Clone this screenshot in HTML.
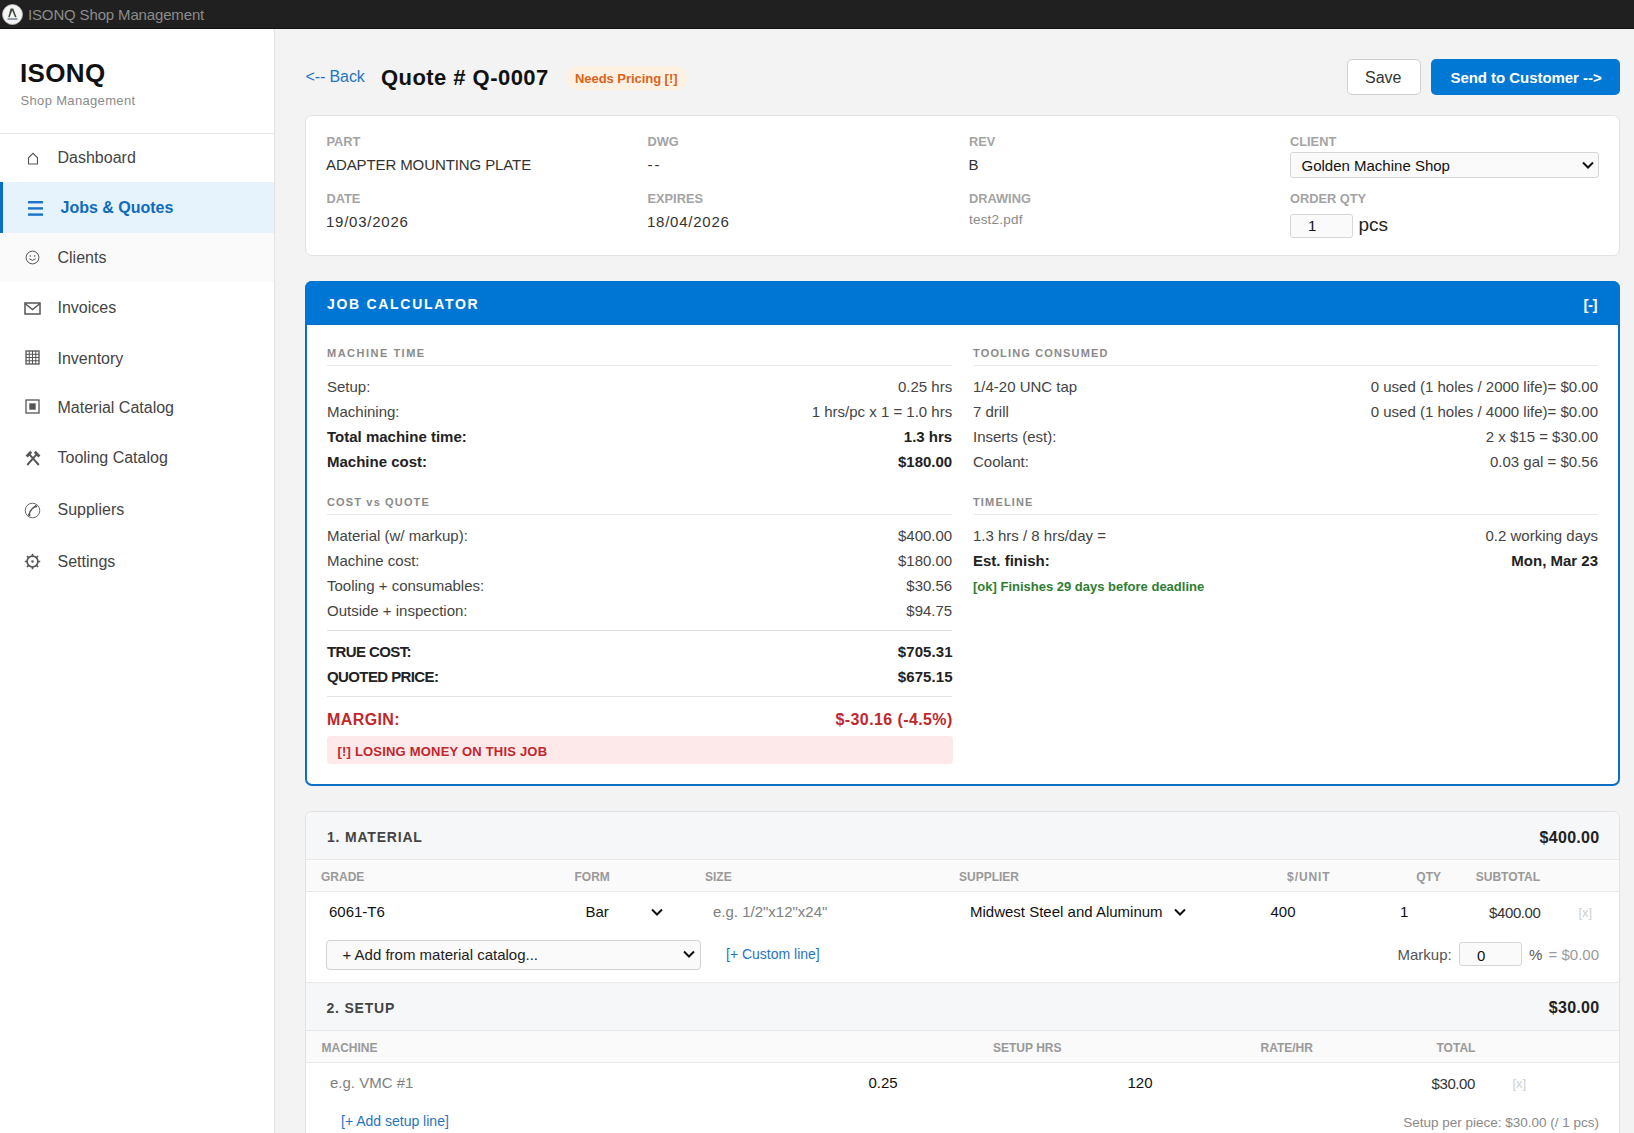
<!DOCTYPE html>
<html><head><meta charset="utf-8"><title>ISONQ Shop Management</title>
<style>
html,body{margin:0;padding:0;}
body{width:1634px;height:1133px;overflow:hidden;position:relative;background:#f3f3f3;font-family:"Liberation Sans",sans-serif;}
.t{position:absolute;white-space:nowrap;}
.b{position:absolute;}
</style></head><body>
<div class="b" style="left:0px;top:0px;width:1634px;height:28px;background:#202020;"></div>
<div class="b" style="left:0px;top:28px;width:1634px;height:1px;background:#111;"></div>
<svg class="b" style="left:2px;top:4px" width="21" height="21" viewBox="0 0 21 21"><circle cx="10.5" cy="10.5" r="10" fill="#f4f4f4" stroke="#bbb" stroke-width="0.8"/><path d="M8.6 4.5 L11.2 4.5 L14.6 13.2 L13 13.2 L10.2 6.4 L7.6 13.2 L6.2 13.2 Z" fill="#3a4a3a"/><rect x="5.5" y="14.2" width="10" height="1.6" fill="#7a8a9a"/></svg>
<div class="t" style="top:7.3px;font-size:15px;line-height:15px;color:#8c8c8c;letter-spacing:-0.15px;left:28.0px;">ISONQ Shop Management</div>
<div class="b" style="left:0px;top:29px;width:274px;height:1104px;background:#fff;"></div>
<div class="b" style="left:274px;top:29px;width:1px;height:1104px;background:#e3e3e3;"></div>
<div class="t" style="top:59.5px;font-size:26px;line-height:26px;color:#111;font-weight:700;letter-spacing:0.35px;left:20.0px;">ISONQ</div>
<div class="t" style="top:94.0px;font-size:13px;line-height:13px;color:#8a8a8a;letter-spacing:0.34px;left:20.5px;">Shop Management</div>
<div class="b" style="left:0px;top:133px;width:274px;height:1px;background:#e6e6e6;"></div>
<div class="b" style="left:0px;top:182px;width:274px;height:51px;background:#e6f2fc;"></div>
<div class="b" style="left:0px;top:182px;width:3px;height:51px;background:#0a6fc8;"></div>
<div class="b" style="left:0px;top:233px;width:274px;height:49px;background:#fafafa;"></div>
<div class="t" style="top:149.5px;font-size:16px;line-height:16px;color:#444;left:57.5px;">Dashboard</div>
<div class="t" style="top:200.0px;font-size:16px;line-height:16px;color:#0e6bbf;font-weight:700;left:60.5px;">Jobs &amp; Quotes</div>
<div class="t" style="top:249.5px;font-size:16px;line-height:16px;color:#444;left:57.5px;">Clients</div>
<div class="t" style="top:299.5px;font-size:16px;line-height:16px;color:#444;left:57.5px;">Invoices</div>
<div class="t" style="top:350.5px;font-size:16px;line-height:16px;color:#444;left:57.5px;">Inventory</div>
<div class="t" style="top:399.5px;font-size:16px;line-height:16px;color:#444;left:57.5px;">Material Catalog</div>
<div class="t" style="top:449.5px;font-size:16px;line-height:16px;color:#444;left:57.5px;">Tooling Catalog</div>
<div class="t" style="top:501.5px;font-size:16px;line-height:16px;color:#444;left:57.5px;">Suppliers</div>
<div class="t" style="top:553.5px;font-size:16px;line-height:16px;color:#444;left:57.5px;">Settings</div>
<svg class="b" style="left:27px;top:152px" width="12" height="13" viewBox="0 0 12 13"><path d="M1.5 12 V5.8 L6 1.3 L10.5 5.8 V12 Z" fill="none" stroke="#555" stroke-width="1.1"/></svg>
<svg class="b" style="left:27px;top:200px" width="17" height="17" viewBox="0 0 17 17"><rect x="1" y="1" width="15" height="2.4" fill="#1a73c8"/><rect x="1" y="7.2" width="15" height="2.4" fill="#1a73c8"/><rect x="1" y="13.4" width="15" height="2.4" fill="#1a73c8"/></svg>
<svg class="b" style="left:25px;top:250px" width="15" height="15" viewBox="0 0 15 15"><circle cx="7.5" cy="7.5" r="6.4" fill="none" stroke="#555" stroke-width="1"/><circle cx="5.3" cy="6" r="0.8" fill="#555"/><circle cx="9.7" cy="6" r="0.8" fill="#555"/><path d="M4.3 8.8 Q7.5 11.8 10.7 8.8" fill="none" stroke="#555" stroke-width="1"/></svg>
<svg class="b" style="left:24px;top:302px" width="17" height="13" viewBox="0 0 17 13"><rect x="1" y="1" width="15" height="11" fill="none" stroke="#555" stroke-width="1.5"/><path d="M1 1.5 L8.5 7.5 L16 1.5" fill="none" stroke="#555" stroke-width="1.4"/></svg>
<svg class="b" style="left:25px;top:350px" width="15" height="15" viewBox="0 0 15 15"><rect x="1" y="1" width="13" height="13" fill="none" stroke="#555" stroke-width="1.3"/><path d="M4.25 1V14 M7.5 1V14 M10.75 1V14 M1 4.25H14 M1 7.5H14 M1 10.75H14" stroke="#555" stroke-width="1"/></svg>
<svg class="b" style="left:25px;top:399px" width="15" height="15" viewBox="0 0 15 15"><rect x="1" y="1" width="13" height="13" fill="none" stroke="#555" stroke-width="1.3"/><rect x="4.3" y="4.3" width="6.4" height="6.4" fill="#555"/></svg>
<svg class="b" style="left:25px;top:450px" width="16" height="16" viewBox="0 0 16 16"><path d="M2.2 15 L11.6 4.4 M13.8 15 L4.4 4.4" stroke="#555" stroke-width="1.9"/><path d="M1.6 6.4 L6.2 1.8 M9.8 1.8 L14.4 6.4" stroke="#555" stroke-width="2.8"/></svg>
<svg class="b" style="left:24px;top:502px" width="17" height="17" viewBox="0 0 17 17"><circle cx="8.5" cy="8.5" r="7.3" fill="none" stroke="#555" stroke-width="0.9"/><path d="M5 13 Q6 7 12 4" fill="none" stroke="#555" stroke-width="1.5"/><path d="M4.3 12.2 L6.3 13.8 M11 3.6 L12.8 5" stroke="#555" stroke-width="2"/></svg>
<svg class="b" style="left:24px;top:553px" width="17" height="17" viewBox="0 0 17 17"><circle cx="8.5" cy="8.5" r="5.4" fill="none" stroke="#555" stroke-width="1.6"/><circle cx="8.5" cy="8.5" r="1.2" fill="#555"/><path d="M8.5 0.8V3 M8.5 14V16.2 M0.8 8.5H3 M14 8.5H16.2 M3 3L4.6 4.6 M12.4 12.4L14 14 M3 14L4.6 12.4 M12.4 4.6L14 3" stroke="#555" stroke-width="1.6"/></svg>
<div class="b" style="left:275px;top:29px;width:1359px;height:1104px;background:#f3f3f3;"></div>
<div class="t" style="top:69.3px;font-size:16px;line-height:16px;color:#1f74c2;letter-spacing:-0.1px;left:305.5px;">&lt;-- Back</div>
<div class="t" style="top:66.9px;font-size:22px;line-height:22px;color:#111;font-weight:700;letter-spacing:0.45px;left:381.0px;">Quote # Q-0007</div>
<div class="b" style="left:566px;top:66px;width:121px;height:24px;background:#fdf1e3;border-radius:12px;"></div>
<div class="t" style="top:71.6px;font-size:13px;line-height:13px;color:#d9641c;font-weight:700;letter-spacing:-0.05px;left:575.0px;">Needs Pricing [!]</div>
<div class="b" style="left:1347px;top:59px;width:74px;height:36px;background:#fff;border:1px solid #cfcfcf;border-radius:5px;box-sizing:border-box;"></div>
<div class="t" style="top:69.5px;font-size:16px;line-height:16px;color:#333;left:1365.0px;">Save</div>
<div class="b" style="left:1431px;top:59px;width:189px;height:36px;background:#0078d4;border-radius:5px;"></div>
<div class="t" style="top:70.3px;font-size:15px;line-height:15px;color:#fff;font-weight:700;letter-spacing:-0.05px;left:1450.5px;">Send to Customer --&gt;</div>
<div class="b" style="left:305px;top:115px;width:1315px;height:141px;background:#fff;border:1px solid #e2e2e2;border-radius:7px;box-sizing:border-box;"></div>
<div class="t" style="top:136.2px;font-size:12.8px;line-height:12.8px;color:#a3a3a3;font-weight:700;left:326.5px;">PART</div>
<div class="t" style="top:193.2px;font-size:12.8px;line-height:12.8px;color:#a3a3a3;font-weight:700;left:326.5px;">DATE</div>
<div class="t" style="top:136.2px;font-size:12.8px;line-height:12.8px;color:#a3a3a3;font-weight:700;left:647.5px;">DWG</div>
<div class="t" style="top:193.2px;font-size:12.8px;line-height:12.8px;color:#a3a3a3;font-weight:700;left:647.5px;">EXPIRES</div>
<div class="t" style="top:136.2px;font-size:12.8px;line-height:12.8px;color:#a3a3a3;font-weight:700;left:969.0px;">REV</div>
<div class="t" style="top:193.2px;font-size:12.8px;line-height:12.8px;color:#a3a3a3;font-weight:700;left:969.0px;">DRAWING</div>
<div class="t" style="top:136.2px;font-size:12.8px;line-height:12.8px;color:#a3a3a3;font-weight:700;left:1290.0px;">CLIENT</div>
<div class="t" style="top:193.2px;font-size:12.8px;line-height:12.8px;color:#a3a3a3;font-weight:700;left:1290.0px;">ORDER QTY</div>
<div class="t" style="top:157.3px;font-size:15px;line-height:15px;color:#333;letter-spacing:-0.1px;left:326.0px;">ADAPTER MOUNTING PLATE</div>
<div class="t" style="top:157.3px;font-size:15px;line-height:15px;color:#333;letter-spacing:2px;left:647.5px;">--</div>
<div class="t" style="top:157.3px;font-size:15px;line-height:15px;color:#333;left:968.5px;">B</div>
<div class="t" style="top:214.3px;font-size:15px;line-height:15px;color:#333;letter-spacing:0.75px;left:326.0px;">19/03/2026</div>
<div class="t" style="top:214.3px;font-size:15px;line-height:15px;color:#333;letter-spacing:0.75px;left:647.0px;">18/04/2026</div>
<div class="t" style="top:212.6px;font-size:13.5px;line-height:13.5px;color:#8a8a8a;letter-spacing:0.2px;left:969.0px;">test2.pdf</div>
<div class="b" style="left:1290px;top:152px;width:309px;height:26px;background:#fafafa;border:1px solid #d6d6d6;border-radius:3px;box-sizing:border-box;"></div>
<div class="t" style="top:158.3px;font-size:15px;line-height:15px;color:#111;left:1301.5px;">Golden Machine Shop</div>
<svg class="b" style="left:1581px;top:159px" width="14" height="12" viewBox="0 0 14 12"><path d="M2 3.5 L7 8.5 L12 3.5" fill="none" stroke="#111" stroke-width="2"/></svg>
<div class="b" style="left:1290px;top:214px;width:63px;height:24px;background:#fafafa;border:1px solid #d6d6d6;border-radius:3px;box-sizing:border-box;"></div>
<div class="t" style="top:217.8px;font-size:15px;line-height:15px;color:#111;left:1308.0px;">1</div>
<div class="t" style="top:214.9px;font-size:19px;line-height:19px;color:#222;left:1358.5px;">pcs</div>
<div class="b" style="left:305px;top:281px;width:1315px;height:505px;background:#fff;border:2px solid #0b6fc6;border-radius:7px;box-sizing:border-box;"></div>
<div class="b" style="left:305px;top:281px;width:1315px;height:44px;background:#0076d4;border-radius:7px 7px 0 0;border-bottom:1px solid #0a6cc0;box-sizing:border-box;"></div>
<div class="t" style="top:297.1px;font-size:14px;line-height:14px;color:#fff;font-weight:700;letter-spacing:1.7px;left:327.0px;">JOB CALCULATOR</div>
<div class="t" style="top:296.8px;font-size:15px;line-height:15px;color:#fff;font-weight:700;letter-spacing:-0.5px;left:1583.5px;">[-]</div>
<div class="t" style="top:347.7px;font-size:11px;line-height:11px;color:#8a8a8a;font-weight:700;letter-spacing:1.5px;left:327.0px;">MACHINE TIME</div>
<div class="b" style="left:327px;top:365px;width:625.2px;height:1px;background:#e9e9e9;"></div>
<div class="t" style="top:347.7px;font-size:11px;line-height:11px;color:#8a8a8a;font-weight:700;letter-spacing:1.15px;left:973.0px;">TOOLING CONSUMED</div>
<div class="b" style="left:973px;top:365px;width:625px;height:1px;background:#e9e9e9;"></div>
<div class="t" style="top:379.3px;font-size:15px;line-height:15px;color:#444;left:327.0px;">Setup:</div>
<div class="t" style="top:379.3px;font-size:15px;line-height:15px;color:#444;right:681.8px;text-align:right;">0.25 hrs</div>
<div class="t" style="top:404.3px;font-size:15px;line-height:15px;color:#444;left:327.0px;">Machining:</div>
<div class="t" style="top:404.3px;font-size:15px;line-height:15px;color:#444;right:681.8px;text-align:right;">1 hrs/pc x 1 = 1.0 hrs</div>
<div class="t" style="top:429.3px;font-size:15px;line-height:15px;color:#222;font-weight:700;left:327.0px;">Total machine time:</div>
<div class="t" style="top:429.3px;font-size:15px;line-height:15px;color:#222;font-weight:700;right:681.8px;text-align:right;">1.3 hrs</div>
<div class="t" style="top:453.8px;font-size:15px;line-height:15px;color:#222;font-weight:700;left:327.0px;">Machine cost:</div>
<div class="t" style="top:453.8px;font-size:15px;line-height:15px;color:#222;font-weight:700;right:681.8px;text-align:right;">$180.00</div>
<div class="t" style="top:379.3px;font-size:15px;line-height:15px;color:#444;left:973.0px;">1/4-20 UNC tap</div>
<div class="t" style="top:379.3px;font-size:15px;line-height:15px;color:#444;right:36.0px;text-align:right;">0 used (1 holes / 2000 life)= $0.00</div>
<div class="t" style="top:404.3px;font-size:15px;line-height:15px;color:#444;left:973.0px;">7 drill</div>
<div class="t" style="top:404.3px;font-size:15px;line-height:15px;color:#444;right:36.0px;text-align:right;">0 used (1 holes / 4000 life)= $0.00</div>
<div class="t" style="top:429.3px;font-size:15px;line-height:15px;color:#444;left:973.0px;">Inserts (est):</div>
<div class="t" style="top:429.3px;font-size:15px;line-height:15px;color:#444;right:36.0px;text-align:right;">2 x $15 = $30.00</div>
<div class="t" style="top:453.8px;font-size:15px;line-height:15px;color:#444;left:973.0px;">Coolant:</div>
<div class="t" style="top:453.8px;font-size:15px;line-height:15px;color:#444;right:36.0px;text-align:right;">0.03 gal = $0.56</div>
<div class="t" style="top:496.7px;font-size:11px;line-height:11px;color:#8a8a8a;font-weight:700;letter-spacing:1.15px;left:327.0px;">COST vs QUOTE</div>
<div class="b" style="left:327px;top:514px;width:625.2px;height:1px;background:#e9e9e9;"></div>
<div class="t" style="top:496.7px;font-size:11px;line-height:11px;color:#8a8a8a;font-weight:700;letter-spacing:1.15px;left:973.0px;">TIMELINE</div>
<div class="b" style="left:973px;top:514px;width:625px;height:1px;background:#e9e9e9;"></div>
<div class="t" style="top:528.3px;font-size:15px;line-height:15px;color:#444;left:327.0px;">Material (w/ markup):</div>
<div class="t" style="top:528.3px;font-size:15px;line-height:15px;color:#444;right:681.8px;text-align:right;">$400.00</div>
<div class="t" style="top:552.9px;font-size:15px;line-height:15px;color:#444;left:327.0px;">Machine cost:</div>
<div class="t" style="top:552.9px;font-size:15px;line-height:15px;color:#444;right:681.8px;text-align:right;">$180.00</div>
<div class="t" style="top:577.9px;font-size:15px;line-height:15px;color:#444;left:327.0px;">Tooling + consumables:</div>
<div class="t" style="top:577.9px;font-size:15px;line-height:15px;color:#444;right:681.8px;text-align:right;">$30.56</div>
<div class="t" style="top:602.7px;font-size:15px;line-height:15px;color:#444;left:327.0px;">Outside + inspection:</div>
<div class="t" style="top:602.7px;font-size:15px;line-height:15px;color:#444;right:681.8px;text-align:right;">$94.75</div>
<div class="b" style="left:327px;top:630px;width:625.2px;height:1px;background:#e3e3e3;"></div>
<div class="t" style="top:644.3px;font-size:15px;line-height:15px;color:#222;font-weight:700;letter-spacing:-0.6px;left:327.0px;">TRUE COST:</div>
<div class="t" style="top:644.3px;font-size:15px;line-height:15px;color:#222;font-weight:700;letter-spacing:0.1px;right:681.3px;text-align:right;">$705.31</div>
<div class="t" style="top:668.6px;font-size:15px;line-height:15px;color:#222;font-weight:700;letter-spacing:-0.6px;left:327.0px;">QUOTED PRICE:</div>
<div class="t" style="top:668.6px;font-size:15px;line-height:15px;color:#222;font-weight:700;letter-spacing:0.1px;right:681.3px;text-align:right;">$675.15</div>
<div class="b" style="left:327px;top:696px;width:625.2px;height:1px;background:#e3e3e3;"></div>
<div class="t" style="top:711.5px;font-size:16px;line-height:16px;color:#c0272d;font-weight:700;letter-spacing:0.4px;left:327.0px;">MARGIN:</div>
<div class="t" style="top:711.5px;font-size:16px;line-height:16px;color:#c0272d;font-weight:700;letter-spacing:0.4px;right:681.3px;text-align:right;">$-30.16 (-4.5%)</div>
<div class="b" style="left:327px;top:736px;width:626px;height:28px;background:#fde8ea;border-radius:4px;"></div>
<div class="t" style="top:745.0px;font-size:13px;line-height:13px;color:#c0272d;font-weight:700;letter-spacing:0.2px;left:337.5px;">[!] LOSING MONEY ON THIS JOB</div>
<div class="t" style="top:528.3px;font-size:15px;line-height:15px;color:#444;left:973.0px;">1.3 hrs / 8 hrs/day =</div>
<div class="t" style="top:528.3px;font-size:15px;line-height:15px;color:#444;right:36.0px;text-align:right;">0.2 working days</div>
<div class="t" style="top:553.3px;font-size:15px;line-height:15px;color:#222;font-weight:700;left:973.0px;">Est. finish:</div>
<div class="t" style="top:553.3px;font-size:15px;line-height:15px;color:#222;font-weight:700;right:36.0px;text-align:right;">Mon, Mar 23</div>
<div class="t" style="top:579.5px;font-size:13px;line-height:13px;color:#2e7d32;font-weight:700;left:973.0px;">[ok] Finishes 29 days before deadline</div>
<div class="b" style="left:305px;top:811px;width:1315px;height:342px;background:#fff;border:1px solid #e2e2e2;border-radius:7px;box-sizing:border-box;"></div>
<div class="b" style="left:306px;top:812px;width:1313px;height:47px;background:#f6f7f9;border-radius:6px 6px 0 0;"></div>
<div class="b" style="left:306px;top:859px;width:1313px;height:1px;background:#e8e8e8;"></div>
<div class="b" style="left:306px;top:860px;width:1313px;height:31px;background:#fafafa;"></div>
<div class="b" style="left:306px;top:891px;width:1313px;height:1px;background:#e8e8e8;"></div>
<div class="t" style="top:830.1px;font-size:14px;line-height:14px;color:#444;font-weight:700;letter-spacing:0.8px;left:327.0px;">1. MATERIAL</div>
<div class="t" style="top:829.5px;font-size:16px;line-height:16px;color:#222;font-weight:700;letter-spacing:0.3px;right:34.5px;text-align:right;">$400.00</div>
<div class="t" style="top:870.8px;font-size:12px;line-height:12px;color:#999;font-weight:700;left:321.0px;">GRADE</div>
<div class="t" style="top:870.8px;font-size:12px;line-height:12px;color:#999;font-weight:700;left:574.5px;">FORM</div>
<div class="t" style="top:870.8px;font-size:12px;line-height:12px;color:#999;font-weight:700;left:705.0px;">SIZE</div>
<div class="t" style="top:870.8px;font-size:12px;line-height:12px;color:#999;font-weight:700;left:959.0px;">SUPPLIER</div>
<div class="t" style="top:870.8px;font-size:12px;line-height:12px;color:#999;font-weight:700;letter-spacing:0.9px;right:303.5px;text-align:right;">$/UNIT</div>
<div class="t" style="top:870.8px;font-size:12px;line-height:12px;color:#999;font-weight:700;right:193.0px;text-align:right;">QTY</div>
<div class="t" style="top:870.8px;font-size:12px;line-height:12px;color:#999;font-weight:700;right:94.0px;text-align:right;">SUBTOTAL</div>
<div class="t" style="top:904.3px;font-size:15px;line-height:15px;color:#111;left:329.0px;">6061-T6</div>
<div class="t" style="top:904.3px;font-size:15px;line-height:15px;color:#111;left:585.5px;">Bar</div>
<svg class="b" style="left:649px;top:906px" width="16" height="12" viewBox="0 0 16 12"><path d="M3 3.5 L8 8.5 L13 3.5" fill="none" stroke="#111" stroke-width="2"/></svg>
<div class="t" style="top:904.3px;font-size:15px;line-height:15px;color:#808080;left:713.0px;">e.g. 1/2"x12"x24"</div>
<div class="t" style="top:904.3px;font-size:15px;line-height:15px;color:#111;left:970.0px;">Midwest Steel and Aluminum</div>
<svg class="b" style="left:1172px;top:906px" width="16" height="12" viewBox="0 0 16 12"><path d="M3 3.5 L8 8.5 L13 3.5" fill="none" stroke="#111" stroke-width="2"/></svg>
<div class="t" style="top:904.3px;font-size:15px;line-height:15px;color:#111;left:1270.5px;">400</div>
<div class="t" style="top:904.3px;font-size:15px;line-height:15px;color:#111;left:1400.0px;">1</div>
<div class="t" style="top:905.3px;font-size:15px;line-height:15px;color:#333;letter-spacing:-0.4px;right:93.5px;text-align:right;">$400.00</div>
<div class="t" style="top:905.5px;font-size:13px;line-height:13px;color:#cfcfcf;left:1578.5px;">[x]</div>
<div class="b" style="left:326px;top:940px;width:375px;height:30px;background:#fafafa;border:1px solid #d2d2d2;border-radius:4px;box-sizing:border-box;"></div>
<div class="t" style="top:946.6px;font-size:15px;line-height:15px;color:#222;left:342.5px;">+ Add from material catalog...</div>
<svg class="b" style="left:681px;top:948px" width="16" height="12" viewBox="0 0 16 12"><path d="M3 3.5 L8 8.5 L13 3.5" fill="none" stroke="#111" stroke-width="2"/></svg>
<div class="t" style="top:947.2px;font-size:14px;line-height:14px;color:#1f74c2;left:726.0px;">[+ Custom line]</div>
<div class="t" style="top:946.8px;font-size:15px;line-height:15px;color:#555;left:1397.5px;">Markup:</div>
<div class="b" style="left:1459px;top:942px;width:63px;height:24px;background:#fafafa;border:1px solid #d6d6d6;border-radius:3px;box-sizing:border-box;"></div>
<div class="t" style="top:947.8px;font-size:15px;line-height:15px;color:#111;left:1477.0px;">0</div>
<div class="t" style="top:946.8px;font-size:15px;line-height:15px;color:#555;left:1529.0px;">%</div>
<div class="t" style="top:946.8px;font-size:15px;line-height:15px;color:#9a9a9a;right:35.0px;text-align:right;">= $0.00</div>
<div class="b" style="left:306px;top:982px;width:1313px;height:1px;background:#e8e8e8;"></div>
<div class="b" style="left:306px;top:983px;width:1313px;height:47px;background:#f6f7f9;"></div>
<div class="b" style="left:306px;top:1030px;width:1313px;height:1px;background:#e8e8e8;"></div>
<div class="b" style="left:306px;top:1031px;width:1313px;height:31px;background:#fafafa;"></div>
<div class="b" style="left:306px;top:1062px;width:1313px;height:1px;background:#e8e8e8;"></div>
<div class="t" style="top:1001.1px;font-size:14px;line-height:14px;color:#444;font-weight:700;letter-spacing:0.8px;left:326.5px;">2. SETUP</div>
<div class="t" style="top:999.5px;font-size:16px;line-height:16px;color:#222;font-weight:700;letter-spacing:0.3px;right:34.5px;text-align:right;">$30.00</div>
<div class="t" style="top:1041.8px;font-size:12px;line-height:12px;color:#999;font-weight:700;left:321.5px;">MACHINE</div>
<div class="t" style="top:1041.8px;font-size:12px;line-height:12px;color:#999;font-weight:700;left:993.0px;">SETUP HRS</div>
<div class="t" style="top:1041.8px;font-size:12px;line-height:12px;color:#999;font-weight:700;left:1260.5px;">RATE/HR</div>
<div class="t" style="top:1041.8px;font-size:12px;line-height:12px;color:#999;font-weight:700;left:1436.5px;">TOTAL</div>
<div class="t" style="top:1075.3px;font-size:15px;line-height:15px;color:#808080;left:330.0px;">e.g. VMC #1</div>
<div class="t" style="top:1075.3px;font-size:15px;line-height:15px;color:#111;left:868.5px;">0.25</div>
<div class="t" style="top:1075.3px;font-size:15px;line-height:15px;color:#111;left:1127.5px;">120</div>
<div class="t" style="top:1076.3px;font-size:15px;line-height:15px;color:#333;letter-spacing:-0.4px;right:159.0px;text-align:right;">$30.00</div>
<div class="t" style="top:1076.5px;font-size:13px;line-height:13px;color:#cfcfcf;left:1512.5px;">[x]</div>
<div class="t" style="top:1113.7px;font-size:14px;line-height:14px;color:#1f74c2;left:341.0px;">[+ Add setup line]</div>
<div class="t" style="top:1115.6px;font-size:13.5px;line-height:13.5px;color:#8a8a8a;right:35.0px;text-align:right;">Setup per piece: $30.00 (/ 1 pcs)</div>
</body></html>
